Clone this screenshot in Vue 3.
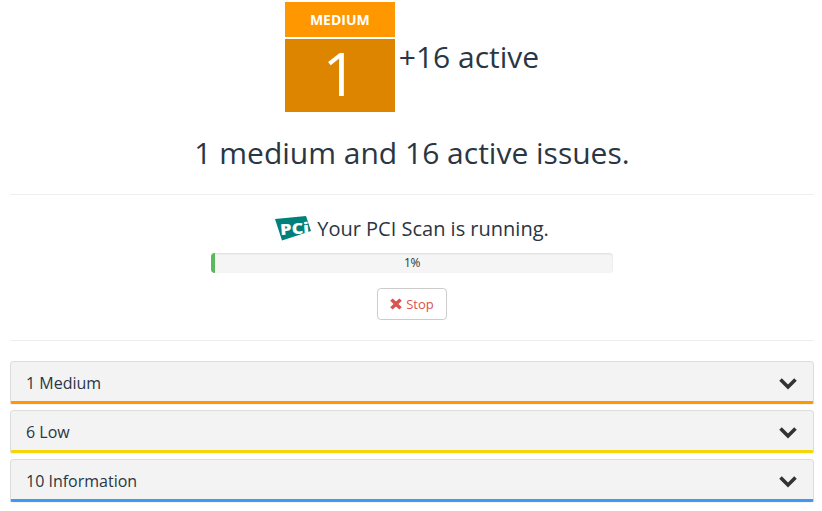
<script setup>
const panels = [
  { label: '1 Medium', color: '#ff9800' },
  { label: '6 Low', color: '#f5d60a' },
  { label: '10 Information', color: '#3d99f5' },
]
</script>

<template>
  <div class="page">
    <div class="score">
      <div class="badge">
        <div class="badge-head">MEDIUM</div>
        <div class="badge-count">1</div>
      </div>
      <div class="active">+16 active</div>
    </div>
    <h2 class="summary">1 medium and 16 active issues.</h2>
    <hr class="rule first" />
    <div class="scan">
      <div class="scan-title">
        <svg class="pci" viewBox="0 0 36 25" width="36" height="25">
          <polygon points="0,3 31,0 36,15 7,24.5" fill="#00807a" />
          <text x="5.5" y="19" class="pci-text" textLength="29" lengthAdjust="spacingAndGlyphs" transform="rotate(-4 5.5 19)">PCi</text>
        </svg>
        <span>Your PCI Scan is running.</span>
      </div>
      <div class="progress">
        <div class="bar"></div>
        <span class="pct">1%</span>
      </div>
      <button class="stop" type="button">
        <svg viewBox="0 0 12 12" width="12" height="12">
          <path d="M2.6 0.4 6 3.6 9.4 0.4 11.8 2.8 8.4 6 11.8 9.2 9.4 11.6 6 8.4 2.6 11.6 0.2 9.2 3.6 6 0.2 2.8Z" fill="#d9534f" />
        </svg>
        <span>Stop</span>
      </button>
    </div>
    <hr class="rule second" />
    <div class="panels">
      <div v-for="p in panels" :key="p.label" class="panel" :style="{ borderBottomColor: p.color }">
        <span>{{ p.label }}</span>
        <svg class="chev" viewBox="0 0 20 14" width="20" height="14">
          <path d="M2.5 3.5 10 11 17.5 3.5" fill="none" stroke="#333" stroke-width="3.6" />
        </svg>
      </div>
    </div>
  </div>
</template>

<style scoped>
.page {
  width: 822px;
  height: 511px;
  box-sizing: border-box;
  padding: 2px 8px 0 10px;
  font-family: "Open Sans", sans-serif;
  color: #2a3644;
  overflow: hidden;
}
.score {
  display: flex;
  justify-content: center;
  align-items: flex-start;
  gap: 4px;
}
.badge {
  width: 110px;
  display: flex;
  flex-direction: column;
  gap: 2px;
  color: #fff;
  text-align: center;
}
.badge-head {
  height: 35px;
  line-height: 35px;
  background: #ff9800;
  font-size: 14px;
  font-weight: 700;
}
.badge-count {
  height: 73px;
  line-height: 68px;
  background: #de8500;
  font-size: 60px;
  font-weight: 400;
}
.active {
  font-size: 30px;
  line-height: 38px;
  margin-top: 36px;
}
.summary {
  margin: 21px 0 0;
  font-size: 30px;
  line-height: 40px;
  font-weight: 400;
  text-align: center;
}
.rule {
  border: 0;
  border-top: 1px solid #eee;
  margin: 0;
}
.first { margin-top: 21px; }
.second { margin-top: 20px; }
.scan {
  display: flex;
  flex-direction: column;
  align-items: center;
}
.scan-title {
  display: flex;
  align-items: center;
  gap: 6px;
  margin-top: 20px;
  height: 27px;
  font-size: 20px;
}
.pci-text {
  font-family: "Open Sans", sans-serif;
  font-size: 15px;
  font-weight: 800;
  fill: #fff;
}
.progress {
  position: relative;
  width: 402px;
  height: 20px;
  line-height: 17px;
  margin-top: 11px;
  background: #f5f5f5;
  border-radius: 4px;
  box-shadow: inset 0 1px 2px rgba(0, 0, 0, 0.1);
  overflow: hidden;
  text-align: center;
}
.bar {
  position: absolute;
  left: 0;
  top: 0;
  bottom: 0;
  width: 4px;
  background: #5cb85c;
}
.pct {
  position: relative;
  font-size: 12px;
  line-height: 17px;
  color: #333;
  letter-spacing: -0.5px;
}
.stop {
  display: flex;
  align-items: center;
  gap: 4px;
  margin-top: 15px;
  height: 32px;
  padding: 0 12px;
  background: #fff;
  border: 1px solid #ccc;
  border-radius: 4px;
  font-family: inherit;
  font-size: 13px;
  color: #d9534f;
}
.panels {
  display: flex;
  flex-direction: column;
  gap: 6px;
  margin-top: 20px;
}
.panel {
  display: flex;
  justify-content: space-between;
  align-items: center;
  box-sizing: border-box;
  height: 43px;
  padding: 2px 16px 0 15px;
  background: #f3f3f3;
  border: 1px solid #ddd;
  border-bottom: 3px solid;
  border-radius: 4px 4px 2px 2px;
  font-size: 16px;
  box-shadow: 0 1px 1px rgba(0, 0, 0, 0.05);
}
.chev { margin-right: -1px; }
</style>
